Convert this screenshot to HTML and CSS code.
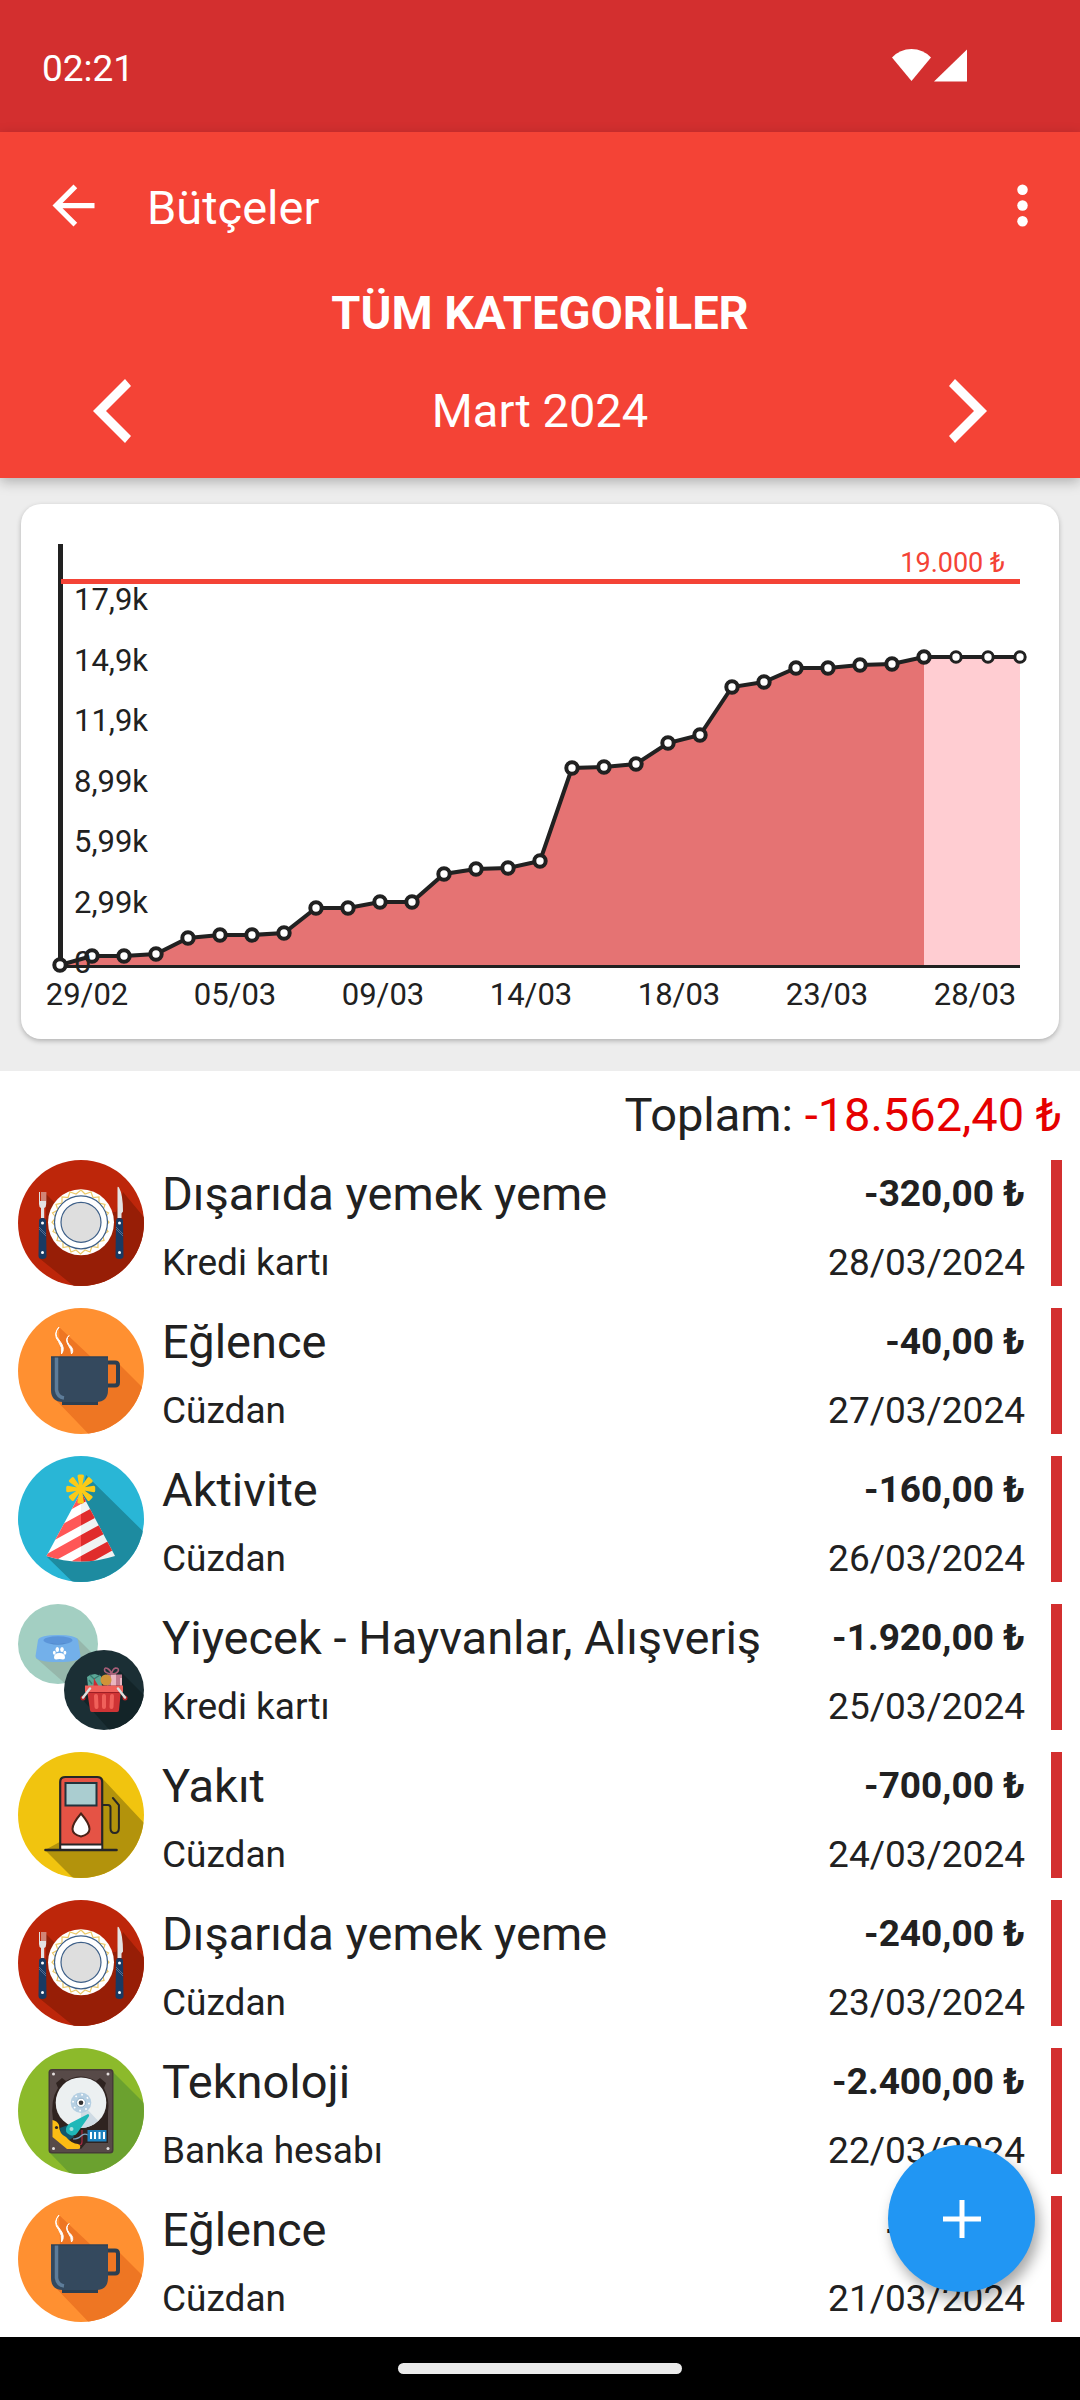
FILE: index.html
```html
<!DOCTYPE html>
<html lang="tr">

<head>
    <meta charset="UTF-8" />
    <meta name="viewport" content="width=device-width, initial-scale=1.0" />
    <title>Bütçeler</title>
    <link rel="stylesheet" href="styles.css">
</head>

<body>
    <!-- Category icons -->
    <svg class="sprite" aria-hidden="true">
        <defs>
            <clipPath id="disc"><circle cx="63" cy="63" r="63" /></clipPath>
            <clipPath id="disc-a"><circle cx="40" cy="40" r="40" /></clipPath>
            <clipPath id="disc-b"><circle cx="86" cy="86" r="40" /></clipPath>
            <clipPath id="cone"><path d="M63 36L28.500 100Q62 111 97 100Z" /></clipPath>
        </defs>

        <symbol id="icon-dining" viewBox="0 0 126 126">
            <g clip-path="url(#disc)">
                <rect width="126" height="126" fill="#bd260a" />
                <path d="M28 34L46 52H98L105 32L140 74V140H73L21 98V60H28Z" fill="#971e06" />
            </g>
            <path d="M21 32h1v9h1.500v-9h1v9h1v-9h1v9h1v-9h.7v12q0 3-2 4v10h-3.200V48q-2-1-2-4Z" fill="#e3e3e3" />
            <path d="M21 61q0-3 3.500-3t3.500 3l.5 35q0 3-4 3t-4-3Z" fill="#193a63" />
            <path d="M99.500 58V28q0-2 1.500-.5 4 7 4 24l-1.500 2V58Z" fill="#e3e3e3" />
            <path d="M98 61q0-3 3.500-3t3.500 3l.5 35q0 3-4 3t-4-3Z" fill="#193a63" />
            <path d="M21 67l7 7M21 69l7 7M98 67l7 7M98 69l7 7" stroke="#6d84a3" stroke-width=".7" />
            <g fill="#fff">
                <circle cx="24.500" cy="63" r="1.500" /><circle cx="24.500" cy="92.500" r="1.500" />
                <circle cx="101.500" cy="63" r="1.500" /><circle cx="101.500" cy="92.500" r="1.500" />
            </g>
            <circle cx="63" cy="62.300" r="33" fill="#fff" />
            <path d="M63 30l4 4 6-2 2 5.500 6-.5v6l6 1.500-2 5.500 5.500 3-3.500 4.500 4 4.800-4 4.200 3 5-5.500 3 1.500 6-6 1v6l-6-1-2 5.500-5-2-4.500 4-4.500-4-5 2-2-5.500-6 1v-6l-6-1 1.500-6-5.500-3 3-5-4-4.200 4-4.800-3.500-4.500 5.500-3-2-5.500 6-1.500v-6l6 .5 2-5.500 6 2Z" fill="none" stroke="#ecc968" stroke-width="1.200" />
            <circle cx="63" cy="62.300" r="26.500" fill="#fff" stroke="#3d5f88" stroke-width="1.200" />
            <circle cx="63" cy="62.300" r="20" fill="#dedede" stroke="#3d5f88" stroke-width="1.200" />
        </symbol>

        <symbol id="icon-cup" viewBox="0 0 126 126">
            <g clip-path="url(#disc)">
                <rect width="126" height="126" fill="#ff9031" />
                <path d="M41 19L73 49L102 57L140 95V140H84L36 90L42 46Z" fill="#ee7623" />
            </g>
            <path d="M90 54.500h7q3 0 3 3v17q0 3-3 3h-7" fill="none" stroke="#2c3e50" stroke-width="4" />
            <path d="M44 93h36v4H44Z" fill="#2c3e50" />
            <path d="M33 48.500h57V82q0 12-12 12H45Q33 94 33 82Z" fill="#34495e" />
            <path d="M38.500 49v33q1 7 7.500 8" fill="none" stroke="#5d7c99" stroke-width="3.500" />
            <path d="M33 48.500h57v1H33Z" fill="#2c3e50" />
            <path d="M41 19q-6 7 0 13 7 8 2.500 14 1-7-3-12.500-6-7 .5-14.500ZM51 27.500q-4 4 0 9 6 5 2.500 9.500 0-5-3-8.500-4-6 .5-10Z" fill="#fff" stroke="#fff" />
        </symbol>

        <symbol id="icon-party" viewBox="0 0 126 126">
            <g clip-path="url(#disc)">
                <rect width="126" height="126" fill="#29b6d6" />
                <path d="M68 19L140 90V140H69L29 101L63 42Z" fill="#1d8ba0" />
            </g>
            <g clip-path="url(#cone)">
                <path d="M0 0H63V126H0Z" fill="#fff" />
                <path d="M63 0H126V126H63Z" fill="#f0f2f2" />
                <path d="M63 30V48L20 71.600V50ZM63 58V69.500L20 93V82ZM63 79V90.500L20 114V103ZM63 100V112L20 134V124Z" fill="#ff5757" />
                <path d="M63 30V48L106 24.500V20ZM63 58V69.500L106 46V34.500ZM63 79V90.500L106 67V55.500ZM63 100V112L106 88V76.500Z" fill="#e02c2c" />
            </g>
            <g fill="#fbca18">
                <g id="petals">
                    <path d="M61.300 31L59.500 20q0-1.500 1.500-1.500h3.500q1.500 0 1.500 1.500L64 31Z" />
                    <path d="M61.300 31L59.500 20q0-1.500 1.500-1.500h3.500q1.500 0 1.500 1.500L64 31Z" transform="rotate(45 62.700 33)" />
                    <path d="M61.300 31L59.500 20q0-1.500 1.500-1.500h3.500q1.500 0 1.500 1.500L64 31Z" transform="rotate(90 62.700 33)" />
                    <path d="M61.300 31L59.500 20q0-1.500 1.500-1.500h3.500q1.500 0 1.500 1.500L64 31Z" transform="rotate(135 62.700 33)" />
                </g>
                <use href="#petals" transform="rotate(180 62.700 33)" />
                <circle cx="62.700" cy="33" r="4.500" />
            </g>
        </symbol>

        <symbol id="icon-pets" viewBox="0 0 126 126">
            <g clip-path="url(#disc-a)">
                <rect width="80" height="80" fill="#a3cfc2" />
                <path d="M59 34L90 65V90H59L18 54Z" fill="#96b7ab" />
            </g>
            <path d="M20 36Q22 31 40 31t20 5l2.500 16q0 6-22.500 6T17.500 52Z" fill="#73b0ea" />
            <ellipse cx="40" cy="36.300" rx="14.500" ry="4" fill="#5b95d9" />
            <path d="M31 39q9 2 18 0-4 1.500-9 1.500T31 39Z" fill="#4a7fc0" />
            <g fill="#fff">
                <path d="M36 53.500q0-4.500 5.500-4.500t5.500 4.500q0 2-2 2-3.500-1-7 0-2 0-2-2Z" />
                <ellipse cx="39.300" cy="45.500" rx="1.800" ry="2.500" /><ellipse cx="44" cy="45.500" rx="1.800" ry="2.500" />
                <ellipse cx="36.300" cy="48.700" rx="1.400" ry="2" /><ellipse cx="46.900" cy="48.700" rx="1.400" ry="2" />
            </g>
        </symbol>

        <symbol id="icon-basket" viewBox="0 0 126 126">
            <g clip-path="url(#disc-b)">
                <rect width="126" height="126" fill="#1b2f35" />
                <path d="M102 67L140 105V140H104L64 95L80 82Z" fill="#132428" />
            </g>
            <path d="M69 73l3-2 5-1 6 2 1 10H70Z" fill="#5aa797" />
            <path d="M72 71l4 4 6-4M71 76l3 4" fill="none" stroke="#36796e" stroke-width="1.300" />
            <path d="M76 74l1.500 3 3 5h-5Z" fill="#c92c33" />
            <path d="M89 70.500h15v11H89Z" fill="#c0788d" />
            <path d="M93 70.500h5v11h-5Z" fill="#e9b6c2" />
            <path d="M102 74h2v7.500h-2Z" fill="#e9b6c2" />
            <path d="M93.500 70q-7-1-7-4t3-1.500 4 5.500q1-5 4-6 4 0 2.500 3.500-2 2.500-6.500 2.500Z" fill="none" stroke="#a85f78" stroke-width="1.600" />
            <circle cx="88" cy="76" r="5.500" fill="#d09338" />
            <path d="M69 86h34l-2 20q0 2-2 2H74q-2 0-2-2Z" fill="#cf3435" />
            <path d="M67 81.500h38V88H67Z" fill="#f0605a" />
            <path d="M70 88h32v1H70Z" fill="#9c1f25" />
            <path d="M78 92l.5 11M86 92v11M94 92l-.5 11" stroke="#f0605a" stroke-width="4" stroke-linecap="round" />
            <circle cx="65" cy="94" r="2.500" fill="#b32228" /><circle cx="107" cy="94" r="2.500" fill="#b32228" />
            <path d="M72 84.500l-7 9M100 84.500l7 9" stroke="#dedede" stroke-width="2.500" stroke-linecap="round" />
        </symbol>

        <symbol id="icon-fuel" viewBox="0 0 126 126">
            <g clip-path="url(#disc)">
                <rect width="126" height="126" fill="#f1c40f" />
                <path d="M84 26L140 86V140H69L27 98L60 80Z" fill="#b3930c" />
            </g>
            <path d="M42.200 97V30q0-5 5-5h32q5 0 5 5v67Z" fill="#e55345" stroke="#262626" stroke-width="2.200" />
            <path d="M43.300 93h40v4h-40Z" fill="#fff" />
            <path d="M42 92.500h42" stroke="#262626" stroke-width="2" />
            <path d="M27.500 98h71" stroke="#262626" stroke-width="2.600" stroke-linecap="round" />
            <rect x="47.500" y="31" width="31" height="22.500" fill="#aacdd0" stroke="#22333d" stroke-width="2" />
            <path d="M63 61.500q-8.500 10-8.500 15.500t8.500 7.500q8.500-2 8.500-7.500T63 61.500Z" fill="#fff" stroke="#4a2218" stroke-width="2" />
            <path d="M85 53h5q2.500 0 2.500 2.500V76q0 5 4.200 5t4.200-5V53l-6-7" fill="none" stroke="#262626" stroke-width="2" stroke-linecap="round" />
        </symbol>

        <symbol id="icon-disk" viewBox="0 0 126 126">
            <g clip-path="url(#disc)">
                <rect width="126" height="126" fill="#8cba2b" />
                <path d="M94 23L140 69V140H66L31 104Z" fill="#6ba12f" />
            </g>
            <rect x="30.500" y="21" width="65" height="84.500" rx="3.500" fill="#463b39" />
            <rect x="32" y="22.500" width="62" height="81.500" rx="2.500" fill="#574a48" />
            <path d="M38 35l6-5 4 3q14-9 30 0l4-3 6 5-2 5q6 12 4 24v31H68l-5 6-28-17V72q-3-20 5-32Z" fill="#2f2320" />
            <circle cx="63" cy="54.700" r="25.300" fill="#ecf0f1" />
            <path d="M63 54.700l17 18q-7 7-17 7.300Z" fill="#cfdbe4" />
            <circle cx="63" cy="54.700" r="10.300" fill="#b5cfe2" />
            <circle cx="63" cy="54.700" r="8" fill="none" stroke="#fff" stroke-width="1.700" stroke-dasharray="1.700 4.580" />
            <circle cx="63" cy="54.700" r="4.500" fill="#fff" stroke="#8fb0c9" stroke-width="1" />
            <circle cx="63" cy="54.700" r="2.300" fill="#333" />
            <path d="M42 80l8-3 6 12-5 3-8-4Z" fill="#12576b" />
            <path d="M64 82v12q0 3-3 3" fill="none" stroke="#a72843" stroke-width="1.200" />
            <path d="M55 91q5 0 8-3t7-1" fill="none" stroke="#7fa8c4" stroke-width="1.200" />
            <path d="M70 66q2 1 .5 3L60 84q-3 5-8 3-6-3-3.500-8 1-2 4-4Z" fill="#1fb8b8" />
            <circle cx="53.500" cy="81" r="2" fill="#a9e0de" />
            <path d="M34.500 72q5 1 6.500 5 0 9 7 12 6 7 12 7 3 1 2 4 0 1-2 1H49L34.500 89Z" fill="#fbbc14" />
            <circle cx="38.500" cy="79.500" r="1.600" fill="#2f2320" />
            <rect x="69.500" y="82" width="19" height="11.500" fill="#1e82be" />
            <path d="M73 84v7M77 84v7M81.500 84v7M86 84v7" stroke="#fff" stroke-width="2" />
            <g fill="#e4e0df">
                <circle cx="35.500" cy="26" r="1.500" /><circle cx="90" cy="26" r="1.500" />
                <circle cx="35.500" cy="100.500" r="1.500" /><circle cx="90" cy="100.500" r="1.500" />
            </g>
        </symbol>
    </svg>

    <div class="status-bar">
        <span class="clock">02:21</span>
        <svg class="signal" viewBox="0 0 76 34" aria-hidden="true">
            <path d="M0 8.500Q8 0 19.500 0T39 8.500L19.500 32Z" />
            <path d="M75 .5V32.500H42Z" />
        </svg>
    </div>

    <header class="app-header">
        <div class="toolbar">
            <button type="button" class="icon-btn" aria-label="Geri">
                <svg viewBox="0 0 24 24"><path d="M20 11H7.830l5.590-5.590L12 4l-8 8 8 8 1.410-1.410L7.830 13H20v-2z" /></svg>
            </button>
            <h1>Bütçeler</h1>
            <button type="button" class="icon-btn" aria-label="Menü">
                <svg viewBox="0 0 24 24"><circle cx="12" cy="6" r="2" /><circle cx="12" cy="12" r="2" /><circle cx="12" cy="18" r="2" /></svg>
            </button>
        </div>
        <h2 class="category">TÜM KATEGORİLER</h2>
        <div class="month-nav">
            <button type="button" class="month-btn" aria-label="Önceki ay">
                <svg viewBox="0 0 40 64"><path d="M33 0L39 7L14 32L39 57L33 64L1 32Z" /></svg>
            </button>
            <span class="month">Mart 2024</span>
            <button type="button" class="month-btn" aria-label="Sonraki ay">
                <svg viewBox="0 0 40 64"><path d="M7 0L1 7L26 32L1 57L7 64L39 32Z" /></svg>
            </button>
        </div>
    </header>

    <section class="chart-section">
        <div class="card">
            <svg class="chart" viewBox="0 0 1038 535" role="img" aria-label="Mart 2024">
                <defs>
                    <marker id="dot" viewBox="-8 -8 16 16" markerWidth="16" markerHeight="16" markerUnits="userSpaceOnUse">
                        <circle r="5.700" class="dot" />
                    </marker>
                    <marker id="dot-future" viewBox="-8 -8 16 16" markerWidth="16" markerHeight="16" markerUnits="userSpaceOnUse">
                        <circle r="5.200" class="dot dot-future" />
                    </marker>
                </defs>

                <path class="area-future" d="M903 153H999V462H903Z" />
                <path class="area" d="M39 461L71 452H103L135 450L167 434L199 431H231L263 429L295 404H327L359 398H391L423 370L455 365L487 364L519 357L551 264L583 263L615 260L647 239L679 231L711 183L743 178L775 164H807L839 161L871 160L903 153V462H39Z" />
                <path class="axis-x" d="M39 462.500H999" />
                <path class="axis-y" d="M39.500 40V462" />
                <path class="limit" d="M40 77.500H999" />
                <polyline class="line future" points="903,153 935,153 967,153 999,153" />
                <polyline class="line" points="39,461 71,452 103,452 135,450 167,434 199,431 231,431 263,429 295,404 327,404 359,398 391,398 423,370 455,365 487,364 519,357 551,264 583,263 615,260 647,239 679,231 711,183 743,178 775,164 807,164 839,161 871,160 903,153" />

                <text class="limit-label" x="984" y="68">19.000 ₺</text>
                <g class="labels-y">
                    <text x="53" y="106">17,9k</text>
                    <text x="53" y="167">14,9k</text>
                    <text x="53" y="227">11,9k</text>
                    <text x="53" y="288">8,99k</text>
                    <text x="53" y="348">5,99k</text>
                    <text x="53" y="409">2,99k</text>
                    <text x="53" y="469">0</text>
                </g>
                <g class="labels-x">
                    <text x="66" y="501">29/02</text>
                    <text x="214" y="501">05/03</text>
                    <text x="362" y="501">09/03</text>
                    <text x="510" y="501">14/03</text>
                    <text x="658" y="501">18/03</text>
                    <text x="806" y="501">23/03</text>
                    <text x="954" y="501">28/03</text>
                </g>
            </svg>
        </div>
    </section>

    <main class="transactions">
        <p class="total">Toplam: <span class="negative">-18.562,40 ₺</span></p>

        <ul class="list">
            <li class="row">
                <svg class="avatar" aria-hidden="true"><use href="#icon-dining" /></svg>
                <div class="info">
                    <span class="name">Dışarıda yemek yeme</span>
                    <span class="sub">Kredi kartı</span>
                </div>
                <div class="values">
                    <span class="amount">-320,00 ₺</span>
                    <span class="sub">28/03/2024</span>
                </div>
            </li>
            <li class="row">
                <svg class="avatar" aria-hidden="true"><use href="#icon-cup" /></svg>
                <div class="info">
                    <span class="name">Eğlence</span>
                    <span class="sub">Cüzdan</span>
                </div>
                <div class="values">
                    <span class="amount">-40,00 ₺</span>
                    <span class="sub">27/03/2024</span>
                </div>
            </li>
            <li class="row">
                <svg class="avatar" aria-hidden="true"><use href="#icon-party" /></svg>
                <div class="info">
                    <span class="name">Aktivite</span>
                    <span class="sub">Cüzdan</span>
                </div>
                <div class="values">
                    <span class="amount">-160,00 ₺</span>
                    <span class="sub">26/03/2024</span>
                </div>
            </li>
            <li class="row">
                <svg class="avatar" aria-hidden="true"><use href="#icon-pets" /><use href="#icon-basket" /></svg>
                <div class="info">
                    <span class="name">Yiyecek - Hayvanlar, Alışveriş</span>
                    <span class="sub">Kredi kartı</span>
                </div>
                <div class="values">
                    <span class="amount">-1.920,00 ₺</span>
                    <span class="sub">25/03/2024</span>
                </div>
            </li>
            <li class="row">
                <svg class="avatar" aria-hidden="true"><use href="#icon-fuel" /></svg>
                <div class="info">
                    <span class="name">Yakıt</span>
                    <span class="sub">Cüzdan</span>
                </div>
                <div class="values">
                    <span class="amount">-700,00 ₺</span>
                    <span class="sub">24/03/2024</span>
                </div>
            </li>
            <li class="row">
                <svg class="avatar" aria-hidden="true"><use href="#icon-dining" /></svg>
                <div class="info">
                    <span class="name">Dışarıda yemek yeme</span>
                    <span class="sub">Cüzdan</span>
                </div>
                <div class="values">
                    <span class="amount">-240,00 ₺</span>
                    <span class="sub">23/03/2024</span>
                </div>
            </li>
            <li class="row">
                <svg class="avatar" aria-hidden="true"><use href="#icon-disk" /></svg>
                <div class="info">
                    <span class="name">Teknoloji</span>
                    <span class="sub">Banka hesabı</span>
                </div>
                <div class="values">
                    <span class="amount">-2.400,00 ₺</span>
                    <span class="sub">22/03/2024</span>
                </div>
            </li>
            <li class="row">
                <svg class="avatar" aria-hidden="true"><use href="#icon-cup" /></svg>
                <div class="info">
                    <span class="name">Eğlence</span>
                    <span class="sub">Cüzdan</span>
                </div>
                <div class="values">
                    <span class="amount">-40,00 ₺</span>
                    <span class="sub">21/03/2024</span>
                </div>
            </li>
        </ul>
    </main>

    <button type="button" class="fab" aria-label="Ekle">
        <svg viewBox="0 0 38 38"><path d="M19 0V38M0 19H38" /></svg>
    </button>

    <div class="nav-bar">
        <div class="handle"></div>
    </div>
</body>

</html>
```

FILE: styles.css
```css
* {
    box-sizing: border-box;
}

body {
    margin: 0;
    min-height: 100vh;
    display: flex;
    flex-direction: column;
    font-family: Roboto, 'Noto Sans', sans-serif;
    font-size: 37px;
    background: #ffffff;
    color: #212121;
}

button {
    margin: 0;
    padding: 0;
    border: 0;
    background: none;
    cursor: pointer;
}

svg {
    display: block;
}

.sprite {
    position: absolute;
    width: 0;
    height: 0;
}

/* Status bar */
.status-bar {
    height: 132px;
    padding: 0 112px 0 42px;
    display: flex;
    align-items: center;
    justify-content: space-between;
    background: #d32f2f;
    color: #ffffff;
}

.clock {
    padding-top: 4px;
}

.signal {
    width: 76px;
    height: 34px;
    fill: #ffffff;
}

/* Header */
.app-header {
    position: relative;
    background: #f44336;
    color: #ffffff;
    box-shadow: 0 4px 12px rgba(0, 0, 0, 0.25);
}

.toolbar {
    height: 147px;
    padding: 0 26px 0 42px;
    display: flex;
    align-items: center;
}

.toolbar h1 {
    flex: 1;
    margin: 0;
    padding: 4px 0 0 42px;
    font-size: 47px;
    font-weight: 400;
}

.icon-btn {
    width: 63px;
    height: 63px;
}

.icon-btn svg {
    width: 63px;
    height: 63px;
    fill: #ffffff;
}

.category {
    margin: 0;
    font-size: 47px;
    line-height: 68px;
    text-align: center;
}

.month-nav {
    height: 131px;
    padding: 0 92px 4px;
    display: flex;
    align-items: center;
    justify-content: space-between;
}

.month {
    font-size: 47px;
}

.month-btn svg {
    width: 40px;
    height: 64px;
    fill: #ffffff;
}

/* Chart */
.chart-section {
    padding: 26px 21px 32px;
    background: #ededed;
}

.card {
    border-radius: 20px;
    background: #ffffff;
    box-shadow: 0 2px 5px rgba(0, 0, 0, 0.25);
}

.chart {
    width: 100%;
    height: auto;
    fill: #212121;
    font-size: 31px;
}

.area {
    fill: #e57373;
}

.area-future {
    fill: #ffcdd2;
}

.axis-x,
.axis-y {
    stroke: #212121;
    stroke-width: 3;
}

.axis-y {
    stroke-width: 5;
}

.limit {
    stroke: #f44336;
    stroke-width: 5;
}

.limit-label {
    fill: #f44336;
    font-size: 27px;
    text-anchor: end;
}

.line {
    fill: none;
    stroke: #212121;
    stroke-width: 4;
    marker: url(#dot);
}

.line.future {
    marker: url(#dot-future);
}

.dot {
    fill: #ffffff;
    stroke: #212121;
    stroke-width: 4;
}

.dot-future {
    stroke-width: 3;
}

.labels-x {
    text-anchor: middle;
}

/* Transactions */
.transactions {
    flex: 1;
    padding: 16px 18px 15px;
}

.total {
    margin: 0 0 17px;
    font-size: 47px;
    line-height: 56px;
    text-align: right;
}

.negative {
    color: #e60000;
}

.list {
    margin: 0;
    padding: 0;
    list-style: none;
    display: flex;
    flex-direction: column;
    gap: 22px;
}

.row {
    height: 126px;
    display: flex;
    gap: 18px;
    border-right: 11px solid #d32f2f;
}

.avatar {
    width: 126px;
    height: 126px;
}

.info,
.values {
    padding-top: 6px;
    display: flex;
    flex-direction: column;
    gap: 19px;
}

.info {
    flex: 1;
}

.values {
    padding-right: 26px;
    text-align: right;
}

.name,
.amount {
    line-height: 56px;
}

.name {
    font-size: 47px;
}

.amount {
    font-weight: 700;
}

.sub {
    line-height: 44px;
}

/* Add button */
.fab {
    position: fixed;
    right: 45px;
    bottom: 108px;
    width: 147px;
    height: 147px;
    border-radius: 50%;
    display: flex;
    align-items: center;
    justify-content: center;
    background: #2196f3;
    box-shadow: 4px 8px 14px rgba(0, 0, 0, 0.35);
}

.fab svg {
    width: 38px;
    height: 38px;
    fill: none;
    stroke: #ffffff;
    stroke-width: 5;
}

/* System navigation */
.nav-bar {
    height: 63px;
    display: flex;
    align-items: center;
    justify-content: center;
    background: #000000;
}

.handle {
    width: 284px;
    height: 11px;
    border-radius: 6px;
    background: #ebebeb;
}
```
